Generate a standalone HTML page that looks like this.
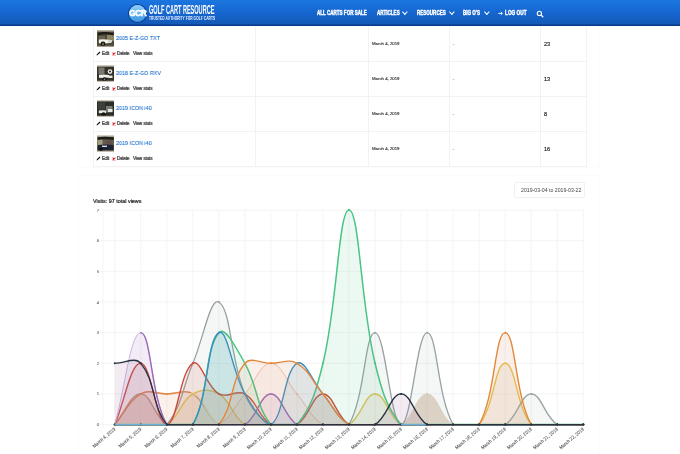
<!DOCTYPE html>
<html><head><meta charset="utf-8">
<style>
html,body{margin:0;padding:0;}
body{width:680px;height:454px;overflow:hidden;position:relative;background:#fff;font-family:"Liberation Sans",sans-serif;}
.hdr{position:absolute;left:0;top:0;width:680px;height:26px;background:linear-gradient(#1b76e0,#1665cf 50%,#135ab9 88%);}
.hdr:after{content:"";position:absolute;left:0;right:0;bottom:0;height:2px;background:linear-gradient(#0f4ea6,#073582);}
.logo{position:absolute;left:128.9px;top:4.8px;width:17.4px;height:17.4px;border-radius:50%;background:linear-gradient(#8fd0fb,#5eb0ee 55%,#3f94de);box-shadow:0 0 0 1px #0c3c8a;}
.logo span{position:absolute;left:-2px;top:3.4px;width:21.4px;text-align:center;color:#fff;font-weight:bold;font-size:9.2px;letter-spacing:-0.7px;transform:scaleX(0.92);-webkit-text-stroke:0.5px #fff;}
.brand{position:absolute;left:148.8px;top:3.4px;color:#fff;font-weight:bold;font-size:12.3px;white-space:nowrap;transform-origin:0 0;transform:scaleX(0.457);letter-spacing:-0.1px;}
.tag{position:absolute;left:149px;top:14.9px;color:#eef5ff;font-weight:bold;font-size:5.9px;white-space:nowrap;transform-origin:0 0;transform:scaleX(0.548);letter-spacing:0.1px;}
.nav{position:absolute;top:9.3px;color:#fff;font-weight:bold;font-size:6.3px;white-space:nowrap;transform-origin:0 0;-webkit-text-stroke:0.4px #fff;}
.chev{position:absolute;top:9.6px;width:2.7px;height:2.7px;border-right:1.1px solid #fff;border-bottom:1.1px solid #fff;transform:rotate(45deg);}
.card{position:absolute;background:#fff;box-shadow:0 0 0 1px #fcfcfc;}
.tline{position:absolute;background:#f2f2f2;}
.row{position:absolute;left:93px;width:493px;height:34.6px;}
.thumb{position:absolute;left:3.9px;top:2.9px;}
.title{position:absolute;left:23px;top:7.7px;color:#1e6fcc;font-size:5.9px;transform-origin:0 0;transform:scaleX(0.915);white-space:nowrap;will-change:transform;-webkit-text-stroke:0.1px #1e6fcc;}
.pen{position:absolute;left:3.3px;top:24.3px;}
.xx{position:absolute;left:19.2px;top:24.8px;}
.act{position:absolute;top:23.7px;color:#2a2a2a;font-size:4.75px;transform-origin:0 0;transform:scaleX(0.9);white-space:nowrap;will-change:transform;-webkit-text-stroke:0.2px #2a2a2a;}
.date{position:absolute;left:278.8px;top:14.1px;color:#222;font-size:4.3px;white-space:nowrap;will-change:transform;-webkit-text-stroke:0.1px #222;}
.dash{position:absolute;left:359.5px;top:13.8px;color:#555;font-size:5px;}
.num{position:absolute;left:450.6px;top:13.7px;color:#1a1a1a;font-size:5.6px;will-change:transform;-webkit-text-stroke:0.15px #1a1a1a;}
.visits{position:absolute;left:92.8px;top:198.2px;color:#1a1a1a;font-size:5.4px;white-space:nowrap;will-change:transform;-webkit-text-stroke:0.2px #1a1a1a;}
.range{position:absolute;left:514.5px;top:183.3px;width:69.5px;height:13.5px;box-shadow:0 0 0 0.6px #e8e8e8;}
.range span{position:absolute;left:6px;top:4px;color:#444;font-size:5.2px;white-space:nowrap;will-change:transform;}
</style></head><body>
<div class="card" style="left:79px;top:-2px;width:520px;height:169px;"></div>
<div class="card" style="left:79px;top:175.5px;width:520px;height:290px;"></div>
<div class="tline" style="left:93px;top:26px;width:0.8px;height:140.8px;"></div>
<div class="tline" style="left:255px;top:26px;width:0.8px;height:140.8px;"></div>
<div class="tline" style="left:368px;top:26px;width:0.8px;height:140.8px;"></div>
<div class="tline" style="left:449px;top:26px;width:0.8px;height:140.8px;"></div>
<div class="tline" style="left:540px;top:26px;width:0.8px;height:140.8px;"></div>
<div class="tline" style="left:585.5px;top:26px;width:0.8px;height:140.8px;"></div>
<div class="tline" style="left:93px;top:61.2px;width:493px;height:0.8px;"></div>
<div class="tline" style="left:93px;top:96.1px;width:493px;height:0.8px;"></div>
<div class="tline" style="left:93px;top:131.1px;width:493px;height:0.8px;"></div>
<div class="tline" style="left:93px;top:166.1px;width:493px;height:0.8px;"></div>

<div class="row" style="top:27.1px">
  <svg class="thumb" width="17.3" height="17.3" viewBox="0 0 17.3 17.3"><defs><filter id="tb" x="-5%" y="-5%" width="110%" height="110%"><feGaussianBlur stdDeviation="0.35"/></filter></defs><g filter="url(#tb)"><rect width="17.3" height="17.3" fill="#4d4838"/><rect x="10" y="5" width="7.3" height="6" fill="#8c8660"/><rect x="0" y="0" width="17.3" height="1.6" fill="#b8b0a0"/><path d="M1 3 Q8 1 16.5 3.5 L16.5 5.5 Q8 3 1 5.5Z" fill="#1d1b16"/><rect x="2" y="6" width="6" height="3" fill="#6a6350"/><path d="M1.8 9.6 Q7 8.8 13.5 10 L14 12.8 Q8 14 1.8 13.2Z" fill="#f1f0ea"/><rect x="11" y="10" width="4" height="2.5" fill="#d8d6ce"/><circle cx="6" cy="14" r="2.4" fill="#141310"/><circle cx="6" cy="14" r="0.9" fill="#8a8a8a"/><rect x="0" y="15.8" width="17.3" height="1.5" fill="#a89c8c"/></g></svg>
  <div class="title">2005 E-Z-GO TXT</div>
  <svg class="pen" width="5" height="5" viewBox="0 0 5 5"><path d="M0.6 4.4 L0.9 3.3 L3.6 0.6 L4.4 1.4 L1.7 4.1Z" fill="#111"/></svg>
  <div class="act" style="left:9.1px">Edit</div>
  <svg class="xx" width="4" height="4" viewBox="0 0 4 4"><path d="M0.6 0.6 L3.4 3.4 M3.4 0.6 L0.6 3.4" stroke="#d42a2a" stroke-width="1.1"/></svg>
  <div class="act" style="left:23.6px">Delete</div>
  <div class="act" style="left:39.6px">View stats</div>
  <div class="date">March 4, 2019</div>
  <div class="dash">-</div>
  <div class="num">23</div>
</div>
<div class="row" style="top:62.1px">
  <svg class="thumb" width="17.3" height="17.3" viewBox="0 0 17.3 17.3"><defs><filter id="tb" x="-5%" y="-5%" width="110%" height="110%"><feGaussianBlur stdDeviation="0.35"/></filter></defs><g filter="url(#tb)"><rect width="17.3" height="17.3" fill="#34322c"/><rect x="0" y="0" width="17.3" height="1.6" fill="#cfcabe"/><rect x="1.5" y="2.5" width="6" height="6.5" fill="#7a766c"/><circle cx="13" cy="6.6" r="2.3" fill="#f2f2ee"/><circle cx="13" cy="6.6" r="1" fill="#1a1a1a"/><path d="M2 9.8 Q7 9 12 10 L12 12.6 Q7 13.2 2 12.8Z" fill="#efefe9"/><rect x="11.5" y="10.6" width="4" height="2.4" fill="#e8e8e2"/><circle cx="7.5" cy="14.4" r="2.2" fill="#0f0f0f"/><circle cx="7.5" cy="14.4" r="0.8" fill="#888"/><rect x="0" y="15.8" width="17.3" height="1.5" fill="#c8c0b2"/></g></svg>
  <div class="title">2018 E-Z-GO RXV</div>
  <svg class="pen" width="5" height="5" viewBox="0 0 5 5"><path d="M0.6 4.4 L0.9 3.3 L3.6 0.6 L4.4 1.4 L1.7 4.1Z" fill="#111"/></svg>
  <div class="act" style="left:9.1px">Edit</div>
  <svg class="xx" width="4" height="4" viewBox="0 0 4 4"><path d="M0.6 0.6 L3.4 3.4 M3.4 0.6 L0.6 3.4" stroke="#d42a2a" stroke-width="1.1"/></svg>
  <div class="act" style="left:23.6px">Delete</div>
  <div class="act" style="left:39.6px">View stats</div>
  <div class="date">March 4, 2019</div>
  <div class="dash">-</div>
  <div class="num">13</div>
</div>
<div class="row" style="top:97.1px">
  <svg class="thumb" width="17.3" height="17.3" viewBox="0 0 17.3 17.3"><defs><filter id="tb" x="-5%" y="-5%" width="110%" height="110%"><feGaussianBlur stdDeviation="0.35"/></filter></defs><g filter="url(#tb)"><rect width="17.3" height="17.3" fill="#2a2d28"/><rect x="0" y="0" width="17.3" height="1.4" fill="#c9c3b6"/><rect x="1" y="2.5" width="7" height="7" fill="#3c4238"/><rect x="9" y="6" width="6.5" height="6.5" fill="#777a74"/><rect x="11" y="9" width="4.5" height="3" fill="#e6e6e2"/><path d="M1.8 10.5 Q6 9.8 9 10.6 L9 13 Q6 13.4 1.8 13Z" fill="#e9e9e5"/><circle cx="6.5" cy="14.3" r="2" fill="#121212"/><rect x="0" y="15.8" width="17.3" height="1.5" fill="#c6bdac"/></g></svg>
  <div class="title">2019 ICON i40</div>
  <svg class="pen" width="5" height="5" viewBox="0 0 5 5"><path d="M0.6 4.4 L0.9 3.3 L3.6 0.6 L4.4 1.4 L1.7 4.1Z" fill="#111"/></svg>
  <div class="act" style="left:9.1px">Edit</div>
  <svg class="xx" width="4" height="4" viewBox="0 0 4 4"><path d="M0.6 0.6 L3.4 3.4 M3.4 0.6 L0.6 3.4" stroke="#d42a2a" stroke-width="1.1"/></svg>
  <div class="act" style="left:23.6px">Delete</div>
  <div class="act" style="left:39.6px">View stats</div>
  <div class="date">March 4, 2019</div>
  <div class="dash">-</div>
  <div class="num">8</div>
</div>
<div class="row" style="top:132.0px">
  <svg class="thumb" width="17.3" height="17.3" viewBox="0 0 17.3 17.3"><defs><filter id="tb" x="-5%" y="-5%" width="110%" height="110%"><feGaussianBlur stdDeviation="0.35"/></filter></defs><g filter="url(#tb)"><rect width="17.3" height="17.3" fill="#5e5d4c"/><rect x="0" y="0" width="17.3" height="1.6" fill="#d6d0bf"/><rect x="0.5" y="4" width="5" height="7" fill="#a09e80"/><path d="M1 2.4 Q8 1.2 16.5 2.6 L16.5 5 Q8 3.6 1 5Z" fill="#1c1c18"/><rect x="9" y="5.5" width="6" height="5" fill="#62504a"/><path d="M0.8 10 Q8 9 16.5 10 L16.5 15.3 L0.8 15.3Z" fill="#1b2333"/><rect x="5" y="10.6" width="5" height="1.4" fill="#d6dce6"/><circle cx="4" cy="14.6" r="1.8" fill="#0b0b0e"/><rect x="0" y="15.8" width="17.3" height="1.5" fill="#c4bcac"/></g></svg>
  <div class="title">2019 ICON i40</div>
  <svg class="pen" width="5" height="5" viewBox="0 0 5 5"><path d="M0.6 4.4 L0.9 3.3 L3.6 0.6 L4.4 1.4 L1.7 4.1Z" fill="#111"/></svg>
  <div class="act" style="left:9.1px">Edit</div>
  <svg class="xx" width="4" height="4" viewBox="0 0 4 4"><path d="M0.6 0.6 L3.4 3.4 M3.4 0.6 L0.6 3.4" stroke="#d42a2a" stroke-width="1.1"/></svg>
  <div class="act" style="left:23.6px">Delete</div>
  <div class="act" style="left:39.6px">View stats</div>
  <div class="date">March 4, 2019</div>
  <div class="dash">-</div>
  <div class="num">16</div>
</div>
<div class="visits">Visits: 97 total views</div>
<div class="range"><span>2019-03-04 to 2019-03-22</span></div>
<svg width="680" height="454" viewBox="0 0 680 454" style="position:absolute;left:0;top:0" font-family="Liberation Sans, sans-serif"><defs><clipPath id="purpclip"><rect x="140.5" y="200" width="500" height="240"/></clipPath></defs>
<line x1="99" y1="424.60" x2="584" y2="424.60" stroke="#efefef" stroke-width="0.7"/>
<line x1="99" y1="393.95" x2="584" y2="393.95" stroke="#efefef" stroke-width="0.7"/>
<line x1="99" y1="363.30" x2="584" y2="363.30" stroke="#efefef" stroke-width="0.7"/>
<line x1="99" y1="332.65" x2="584" y2="332.65" stroke="#efefef" stroke-width="0.7"/>
<line x1="99" y1="302.00" x2="584" y2="302.00" stroke="#efefef" stroke-width="0.7"/>
<line x1="99" y1="271.35" x2="584" y2="271.35" stroke="#efefef" stroke-width="0.7"/>
<line x1="99" y1="240.70" x2="584" y2="240.70" stroke="#efefef" stroke-width="0.7"/>
<line x1="99" y1="210.05" x2="584" y2="210.05" stroke="#efefef" stroke-width="0.7"/>
<line x1="103" y1="210.05" x2="103" y2="428.60" stroke="#efefef" stroke-width="0.7"/>
<line x1="114.75" y1="210.05" x2="114.75" y2="428.60" stroke="#efefef" stroke-width="0.7"/>
<line x1="140.78" y1="210.05" x2="140.78" y2="428.60" stroke="#efefef" stroke-width="0.7"/>
<line x1="166.81" y1="210.05" x2="166.81" y2="428.60" stroke="#efefef" stroke-width="0.7"/>
<line x1="192.84" y1="210.05" x2="192.84" y2="428.60" stroke="#efefef" stroke-width="0.7"/>
<line x1="218.87" y1="210.05" x2="218.87" y2="428.60" stroke="#efefef" stroke-width="0.7"/>
<line x1="244.90" y1="210.05" x2="244.90" y2="428.60" stroke="#efefef" stroke-width="0.7"/>
<line x1="270.93" y1="210.05" x2="270.93" y2="428.60" stroke="#efefef" stroke-width="0.7"/>
<line x1="296.96" y1="210.05" x2="296.96" y2="428.60" stroke="#efefef" stroke-width="0.7"/>
<line x1="322.99" y1="210.05" x2="322.99" y2="428.60" stroke="#efefef" stroke-width="0.7"/>
<line x1="349.02" y1="210.05" x2="349.02" y2="428.60" stroke="#efefef" stroke-width="0.7"/>
<line x1="375.05" y1="210.05" x2="375.05" y2="428.60" stroke="#efefef" stroke-width="0.7"/>
<line x1="401.08" y1="210.05" x2="401.08" y2="428.60" stroke="#efefef" stroke-width="0.7"/>
<line x1="427.11" y1="210.05" x2="427.11" y2="428.60" stroke="#efefef" stroke-width="0.7"/>
<line x1="453.14" y1="210.05" x2="453.14" y2="428.60" stroke="#efefef" stroke-width="0.7"/>
<line x1="479.17" y1="210.05" x2="479.17" y2="428.60" stroke="#efefef" stroke-width="0.7"/>
<line x1="505.20" y1="210.05" x2="505.20" y2="428.60" stroke="#efefef" stroke-width="0.7"/>
<line x1="531.23" y1="210.05" x2="531.23" y2="428.60" stroke="#efefef" stroke-width="0.7"/>
<line x1="557.26" y1="210.05" x2="557.26" y2="428.60" stroke="#efefef" stroke-width="0.7"/>
<line x1="583.29" y1="210.05" x2="583.29" y2="428.60" stroke="#efefef" stroke-width="0.7"/>
<text x="99.1" y="426.10" text-anchor="end" font-size="4.2" fill="#666" stroke="#666" stroke-width="0.08">0</text>
<text x="99.1" y="395.45" text-anchor="end" font-size="4.2" fill="#666" stroke="#666" stroke-width="0.08">1</text>
<text x="99.1" y="364.80" text-anchor="end" font-size="4.2" fill="#666" stroke="#666" stroke-width="0.08">2</text>
<text x="99.1" y="334.15" text-anchor="end" font-size="4.2" fill="#666" stroke="#666" stroke-width="0.08">3</text>
<text x="99.1" y="303.50" text-anchor="end" font-size="4.2" fill="#666" stroke="#666" stroke-width="0.08">4</text>
<text x="99.1" y="272.85" text-anchor="end" font-size="4.2" fill="#666" stroke="#666" stroke-width="0.08">5</text>
<text x="99.1" y="242.20" text-anchor="end" font-size="4.2" fill="#666" stroke="#666" stroke-width="0.08">6</text>
<text x="99.1" y="211.55" text-anchor="end" font-size="4.2" fill="#666" stroke="#666" stroke-width="0.08">7</text>
<path d="M114.75 424.60 C125.16 424.60 130.37 424.60 140.78 424.60 C151.19 424.60 156.40 424.60 166.81 424.60 C177.22 424.60 182.43 424.60 192.84 424.60 C203.25 424.60 208.46 424.60 218.87 424.60 C229.28 424.60 234.49 424.60 244.90 424.60 C255.31 424.60 260.52 424.60 270.93 424.60 C281.34 424.60 286.55 424.60 296.96 424.60 C307.37 424.60 312.58 424.60 322.99 424.60 C333.40 424.60 338.61 424.60 349.02 424.60 C359.43 424.60 364.64 424.60 375.05 424.60 C385.46 424.60 392.90 424.60 401.08 424.60 C413.72 417.16 416.70 393.95 427.11 393.95 C437.52 393.95 440.50 417.16 453.14 424.60 C461.32 424.60 468.76 424.60 479.17 424.60 C489.58 424.60 494.79 424.60 505.20 424.60 C515.61 424.60 520.82 424.60 531.23 424.60 C541.64 424.60 546.85 424.60 557.26 424.60 C567.67 424.60 572.88 424.60 583.29 424.60 L583.29 424.6 L114.75 424.6 Z" fill="rgba(180,150,115,0.40)" stroke="none"/>
<path d="M114.75 424.60 C125.16 424.60 130.37 424.60 140.78 424.60 C151.19 424.60 156.40 424.60 166.81 424.60 C177.22 424.60 182.43 424.60 192.84 424.60 C203.25 424.60 208.46 424.60 218.87 424.60 C229.28 424.60 234.49 424.60 244.90 424.60 C255.31 424.60 260.52 424.60 270.93 424.60 C281.34 424.60 286.55 424.60 296.96 424.60 C307.37 424.60 312.58 424.60 322.99 424.60 C333.40 424.60 338.61 424.60 349.02 424.60 C359.43 424.60 364.64 424.60 375.05 424.60 C385.46 424.60 392.90 424.60 401.08 424.60 C413.72 417.16 416.70 393.95 427.11 393.95 C437.52 393.95 440.50 417.16 453.14 424.60 C461.32 424.60 468.76 424.60 479.17 424.60 C489.58 424.60 494.79 424.60 505.20 424.60 C515.61 424.60 520.82 424.60 531.23 424.60 C541.64 424.60 546.85 424.60 557.26 424.60 C567.67 424.60 572.88 424.60 583.29 424.60" fill="none" stroke="#d9ccb6" stroke-width="0.6"/>
<circle cx="114.75" cy="424.60" r="1.0" fill="#d9ccb6"/>
<circle cx="140.78" cy="424.60" r="1.0" fill="#d9ccb6"/>
<circle cx="166.81" cy="424.60" r="1.0" fill="#d9ccb6"/>
<circle cx="192.84" cy="424.60" r="1.0" fill="#d9ccb6"/>
<circle cx="218.87" cy="424.60" r="1.0" fill="#d9ccb6"/>
<circle cx="244.90" cy="424.60" r="1.0" fill="#d9ccb6"/>
<circle cx="270.93" cy="424.60" r="1.0" fill="#d9ccb6"/>
<circle cx="296.96" cy="424.60" r="1.0" fill="#d9ccb6"/>
<circle cx="322.99" cy="424.60" r="1.0" fill="#d9ccb6"/>
<circle cx="349.02" cy="424.60" r="1.0" fill="#d9ccb6"/>
<circle cx="375.05" cy="424.60" r="1.0" fill="#d9ccb6"/>
<circle cx="401.08" cy="424.60" r="1.0" fill="#d9ccb6"/>
<circle cx="427.11" cy="393.95" r="1.0" fill="#d9ccb6"/>
<circle cx="453.14" cy="424.60" r="1.0" fill="#d9ccb6"/>
<circle cx="479.17" cy="424.60" r="1.0" fill="#d9ccb6"/>
<circle cx="505.20" cy="424.60" r="1.0" fill="#d9ccb6"/>
<circle cx="531.23" cy="424.60" r="1.0" fill="#d9ccb6"/>
<circle cx="557.26" cy="424.60" r="1.0" fill="#d9ccb6"/>
<circle cx="583.29" cy="424.60" r="1.0" fill="#d9ccb6"/>
<path d="M114.75 424.60 C125.16 412.34 130.37 393.95 140.78 393.95 C151.19 393.95 154.17 417.16 166.81 424.60 C174.99 424.60 182.43 424.60 192.84 424.60 C203.25 424.60 208.46 424.60 218.87 424.60 C229.28 424.60 234.49 424.60 244.90 424.60 C255.31 424.60 260.52 424.60 270.93 424.60 C281.34 424.60 286.55 424.60 296.96 424.60 C307.37 424.60 312.58 424.60 322.99 424.60 C333.40 424.60 338.61 424.60 349.02 424.60 C359.43 424.60 364.64 424.60 375.05 424.60 C385.46 424.60 390.67 424.60 401.08 424.60 C411.49 424.60 416.70 424.60 427.11 424.60 C437.52 424.60 442.73 424.60 453.14 424.60 C463.55 424.60 468.76 424.60 479.17 424.60 C489.58 424.60 494.79 424.60 505.20 424.60 C515.61 424.60 520.82 424.60 531.23 424.60 C541.64 424.60 546.85 424.60 557.26 424.60 C567.67 424.60 572.88 424.60 583.29 424.60 L583.29 424.6 L114.75 424.6 Z" fill="rgba(176,150,120,0.26)" stroke="none"/>
<path d="M114.75 424.60 C125.16 412.34 130.37 393.95 140.78 393.95 C151.19 393.95 154.17 417.16 166.81 424.60 C174.99 424.60 182.43 424.60 192.84 424.60 C203.25 424.60 208.46 424.60 218.87 424.60 C229.28 424.60 234.49 424.60 244.90 424.60 C255.31 424.60 260.52 424.60 270.93 424.60 C281.34 424.60 286.55 424.60 296.96 424.60 C307.37 424.60 312.58 424.60 322.99 424.60 C333.40 424.60 338.61 424.60 349.02 424.60 C359.43 424.60 364.64 424.60 375.05 424.60 C385.46 424.60 390.67 424.60 401.08 424.60 C411.49 424.60 416.70 424.60 427.11 424.60 C437.52 424.60 442.73 424.60 453.14 424.60 C463.55 424.60 468.76 424.60 479.17 424.60 C489.58 424.60 494.79 424.60 505.20 424.60 C515.61 424.60 520.82 424.60 531.23 424.60 C541.64 424.60 546.85 424.60 557.26 424.60 C567.67 424.60 572.88 424.60 583.29 424.60" fill="none" stroke="#b39a78" stroke-width="1.3"/>
<circle cx="114.75" cy="424.60" r="1.0" fill="#b39a78"/>
<circle cx="140.78" cy="393.95" r="1.0" fill="#b39a78"/>
<circle cx="166.81" cy="424.60" r="1.0" fill="#b39a78"/>
<circle cx="192.84" cy="424.60" r="1.0" fill="#b39a78"/>
<circle cx="218.87" cy="424.60" r="1.0" fill="#b39a78"/>
<circle cx="244.90" cy="424.60" r="1.0" fill="#b39a78"/>
<circle cx="270.93" cy="424.60" r="1.0" fill="#b39a78"/>
<circle cx="296.96" cy="424.60" r="1.0" fill="#b39a78"/>
<circle cx="322.99" cy="424.60" r="1.0" fill="#b39a78"/>
<circle cx="349.02" cy="424.60" r="1.0" fill="#b39a78"/>
<circle cx="375.05" cy="424.60" r="1.0" fill="#b39a78"/>
<circle cx="401.08" cy="424.60" r="1.0" fill="#b39a78"/>
<circle cx="427.11" cy="424.60" r="1.0" fill="#b39a78"/>
<circle cx="453.14" cy="424.60" r="1.0" fill="#b39a78"/>
<circle cx="479.17" cy="424.60" r="1.0" fill="#b39a78"/>
<circle cx="505.20" cy="424.60" r="1.0" fill="#b39a78"/>
<circle cx="531.23" cy="424.60" r="1.0" fill="#b39a78"/>
<circle cx="557.26" cy="424.60" r="1.0" fill="#b39a78"/>
<circle cx="583.29" cy="424.60" r="1.0" fill="#b39a78"/>
<path d="M114.75 424.60 C125.16 424.60 130.37 424.60 140.78 424.60 C151.19 424.60 156.40 424.60 166.81 424.60 C177.22 424.60 182.43 424.60 192.84 424.60 C203.25 424.60 210.69 424.60 218.87 424.60 C231.51 417.16 234.49 406.21 244.90 393.95 C255.31 381.69 260.52 363.30 270.93 363.30 C281.34 363.30 286.55 381.69 296.96 393.95 C307.37 406.21 310.35 417.16 322.99 424.60 C331.17 424.60 338.61 424.60 349.02 424.60 C359.43 424.60 364.64 424.60 375.05 424.60 C385.46 424.60 390.67 424.60 401.08 424.60 C411.49 424.60 416.70 424.60 427.11 424.60 C437.52 424.60 442.73 424.60 453.14 424.60 C463.55 424.60 468.76 424.60 479.17 424.60 C489.58 424.60 494.79 424.60 505.20 424.60 C515.61 424.60 520.82 424.60 531.23 424.60 C541.64 424.60 546.85 424.60 557.26 424.60 C567.67 424.60 572.88 424.60 583.29 424.60 L583.29 424.6 L114.75 424.6 Z" fill="rgba(240,170,140,0.10)" stroke="none"/>
<path d="M114.75 424.60 C125.16 424.60 130.37 424.60 140.78 424.60 C151.19 424.60 156.40 424.60 166.81 424.60 C177.22 424.60 182.43 424.60 192.84 424.60 C203.25 424.60 210.69 424.60 218.87 424.60 C231.51 417.16 234.49 406.21 244.90 393.95 C255.31 381.69 260.52 363.30 270.93 363.30 C281.34 363.30 286.55 381.69 296.96 393.95 C307.37 406.21 310.35 417.16 322.99 424.60 C331.17 424.60 338.61 424.60 349.02 424.60 C359.43 424.60 364.64 424.60 375.05 424.60 C385.46 424.60 390.67 424.60 401.08 424.60 C411.49 424.60 416.70 424.60 427.11 424.60 C437.52 424.60 442.73 424.60 453.14 424.60 C463.55 424.60 468.76 424.60 479.17 424.60 C489.58 424.60 494.79 424.60 505.20 424.60 C515.61 424.60 520.82 424.60 531.23 424.60 C541.64 424.60 546.85 424.60 557.26 424.60 C567.67 424.60 572.88 424.60 583.29 424.60" fill="none" stroke="#f0b8a0" stroke-width="0.9"/>
<circle cx="114.75" cy="424.60" r="1.0" fill="#f0b8a0"/>
<circle cx="140.78" cy="424.60" r="1.0" fill="#f0b8a0"/>
<circle cx="166.81" cy="424.60" r="1.0" fill="#f0b8a0"/>
<circle cx="192.84" cy="424.60" r="1.0" fill="#f0b8a0"/>
<circle cx="218.87" cy="424.60" r="1.0" fill="#f0b8a0"/>
<circle cx="244.90" cy="393.95" r="1.0" fill="#f0b8a0"/>
<circle cx="270.93" cy="363.30" r="1.0" fill="#f0b8a0"/>
<circle cx="296.96" cy="393.95" r="1.0" fill="#f0b8a0"/>
<circle cx="322.99" cy="424.60" r="1.0" fill="#f0b8a0"/>
<circle cx="349.02" cy="424.60" r="1.0" fill="#f0b8a0"/>
<circle cx="375.05" cy="424.60" r="1.0" fill="#f0b8a0"/>
<circle cx="401.08" cy="424.60" r="1.0" fill="#f0b8a0"/>
<circle cx="427.11" cy="424.60" r="1.0" fill="#f0b8a0"/>
<circle cx="453.14" cy="424.60" r="1.0" fill="#f0b8a0"/>
<circle cx="479.17" cy="424.60" r="1.0" fill="#f0b8a0"/>
<circle cx="505.20" cy="424.60" r="1.0" fill="#f0b8a0"/>
<circle cx="531.23" cy="424.60" r="1.0" fill="#f0b8a0"/>
<circle cx="557.26" cy="424.60" r="1.0" fill="#f0b8a0"/>
<circle cx="583.29" cy="424.60" r="1.0" fill="#f0b8a0"/>
<path d="M114.75 424.60 C125.16 412.34 128.14 401.39 140.78 393.95 C148.96 389.13 156.40 393.95 166.81 393.95 C177.22 393.95 184.66 389.13 192.84 393.95 C205.48 401.39 206.23 417.16 218.87 424.60 C227.05 424.60 234.49 424.60 244.90 424.60 C255.31 424.60 260.52 424.60 270.93 424.60 C281.34 424.60 286.55 424.60 296.96 424.60 C307.37 424.60 312.58 424.60 322.99 424.60 C333.40 424.60 338.61 424.60 349.02 424.60 C359.43 424.60 364.64 424.60 375.05 424.60 C385.46 424.60 390.67 424.60 401.08 424.60 C411.49 424.60 416.70 424.60 427.11 424.60 C437.52 424.60 442.73 424.60 453.14 424.60 C463.55 424.60 468.76 424.60 479.17 424.60 C489.58 424.60 494.79 424.60 505.20 424.60 C515.61 424.60 520.82 424.60 531.23 424.60 C541.64 424.60 546.85 424.60 557.26 424.60 C567.67 424.60 572.88 424.60 583.29 424.60 L583.29 424.6 L114.75 424.6 Z" fill="rgba(230,140,80,0.12)" stroke="none"/>
<path d="M114.75 424.60 C125.16 412.34 128.14 401.39 140.78 393.95 C148.96 389.13 156.40 393.95 166.81 393.95 C177.22 393.95 184.66 389.13 192.84 393.95 C205.48 401.39 206.23 417.16 218.87 424.60 C227.05 424.60 234.49 424.60 244.90 424.60 C255.31 424.60 260.52 424.60 270.93 424.60 C281.34 424.60 286.55 424.60 296.96 424.60 C307.37 424.60 312.58 424.60 322.99 424.60 C333.40 424.60 338.61 424.60 349.02 424.60 C359.43 424.60 364.64 424.60 375.05 424.60 C385.46 424.60 390.67 424.60 401.08 424.60 C411.49 424.60 416.70 424.60 427.11 424.60 C437.52 424.60 442.73 424.60 453.14 424.60 C463.55 424.60 468.76 424.60 479.17 424.60 C489.58 424.60 494.79 424.60 505.20 424.60 C515.61 424.60 520.82 424.60 531.23 424.60 C541.64 424.60 546.85 424.60 557.26 424.60 C567.67 424.60 572.88 424.60 583.29 424.60" fill="none" stroke="#e0874a" stroke-width="1.4"/>
<circle cx="114.75" cy="424.60" r="1.0" fill="#e0874a"/>
<circle cx="140.78" cy="393.95" r="1.0" fill="#e0874a"/>
<circle cx="166.81" cy="393.95" r="1.0" fill="#e0874a"/>
<circle cx="192.84" cy="393.95" r="1.0" fill="#e0874a"/>
<circle cx="218.87" cy="424.60" r="1.0" fill="#e0874a"/>
<circle cx="244.90" cy="424.60" r="1.0" fill="#e0874a"/>
<circle cx="270.93" cy="424.60" r="1.0" fill="#e0874a"/>
<circle cx="296.96" cy="424.60" r="1.0" fill="#e0874a"/>
<circle cx="322.99" cy="424.60" r="1.0" fill="#e0874a"/>
<circle cx="349.02" cy="424.60" r="1.0" fill="#e0874a"/>
<circle cx="375.05" cy="424.60" r="1.0" fill="#e0874a"/>
<circle cx="401.08" cy="424.60" r="1.0" fill="#e0874a"/>
<circle cx="427.11" cy="424.60" r="1.0" fill="#e0874a"/>
<circle cx="453.14" cy="424.60" r="1.0" fill="#e0874a"/>
<circle cx="479.17" cy="424.60" r="1.0" fill="#e0874a"/>
<circle cx="505.20" cy="424.60" r="1.0" fill="#e0874a"/>
<circle cx="531.23" cy="424.60" r="1.0" fill="#e0874a"/>
<circle cx="557.26" cy="424.60" r="1.0" fill="#e0874a"/>
<circle cx="583.29" cy="424.60" r="1.0" fill="#e0874a"/>
<path d="M114.75 424.60 C125.16 424.60 130.37 424.60 140.78 424.60 C151.19 424.60 158.63 424.60 166.81 424.60 C179.45 417.16 182.43 393.95 192.84 393.95 C203.25 393.95 206.23 417.16 218.87 424.60 C227.05 424.60 234.49 424.60 244.90 424.60 C255.31 424.60 260.52 424.60 270.93 424.60 C281.34 424.60 286.55 424.60 296.96 424.60 C307.37 424.60 312.58 424.60 322.99 424.60 C333.40 424.60 338.61 424.60 349.02 424.60 C359.43 424.60 364.64 424.60 375.05 424.60 C385.46 424.60 390.67 424.60 401.08 424.60 C411.49 424.60 416.70 424.60 427.11 424.60 C437.52 424.60 442.73 424.60 453.14 424.60 C463.55 424.60 468.76 424.60 479.17 424.60 C489.58 424.60 494.79 424.60 505.20 424.60 C515.61 424.60 520.82 424.60 531.23 424.60 C541.64 424.60 546.85 424.60 557.26 424.60 C567.67 424.60 572.88 424.60 583.29 424.60 L583.29 424.6 L114.75 424.6 Z" fill="rgba(240,225,200,0.10)" stroke="none"/>
<path d="M114.75 424.60 C125.16 424.60 130.37 424.60 140.78 424.60 C151.19 424.60 158.63 424.60 166.81 424.60 C179.45 417.16 182.43 393.95 192.84 393.95 C203.25 393.95 206.23 417.16 218.87 424.60 C227.05 424.60 234.49 424.60 244.90 424.60 C255.31 424.60 260.52 424.60 270.93 424.60 C281.34 424.60 286.55 424.60 296.96 424.60 C307.37 424.60 312.58 424.60 322.99 424.60 C333.40 424.60 338.61 424.60 349.02 424.60 C359.43 424.60 364.64 424.60 375.05 424.60 C385.46 424.60 390.67 424.60 401.08 424.60 C411.49 424.60 416.70 424.60 427.11 424.60 C437.52 424.60 442.73 424.60 453.14 424.60 C463.55 424.60 468.76 424.60 479.17 424.60 C489.58 424.60 494.79 424.60 505.20 424.60 C515.61 424.60 520.82 424.60 531.23 424.60 C541.64 424.60 546.85 424.60 557.26 424.60 C567.67 424.60 572.88 424.60 583.29 424.60" fill="none" stroke="#f6eedf" stroke-width="1.7"/>
<circle cx="114.75" cy="424.60" r="1.0" fill="#f6eedf"/>
<circle cx="140.78" cy="424.60" r="1.0" fill="#f6eedf"/>
<circle cx="166.81" cy="424.60" r="1.0" fill="#f6eedf"/>
<circle cx="192.84" cy="393.95" r="1.0" fill="#f6eedf"/>
<circle cx="218.87" cy="424.60" r="1.0" fill="#f6eedf"/>
<circle cx="244.90" cy="424.60" r="1.0" fill="#f6eedf"/>
<circle cx="270.93" cy="424.60" r="1.0" fill="#f6eedf"/>
<circle cx="296.96" cy="424.60" r="1.0" fill="#f6eedf"/>
<circle cx="322.99" cy="424.60" r="1.0" fill="#f6eedf"/>
<circle cx="349.02" cy="424.60" r="1.0" fill="#f6eedf"/>
<circle cx="375.05" cy="424.60" r="1.0" fill="#f6eedf"/>
<circle cx="401.08" cy="424.60" r="1.0" fill="#f6eedf"/>
<circle cx="427.11" cy="424.60" r="1.0" fill="#f6eedf"/>
<circle cx="453.14" cy="424.60" r="1.0" fill="#f6eedf"/>
<circle cx="479.17" cy="424.60" r="1.0" fill="#f6eedf"/>
<circle cx="505.20" cy="424.60" r="1.0" fill="#f6eedf"/>
<circle cx="531.23" cy="424.60" r="1.0" fill="#f6eedf"/>
<circle cx="557.26" cy="424.60" r="1.0" fill="#f6eedf"/>
<circle cx="583.29" cy="424.60" r="1.0" fill="#f6eedf"/>
<path d="M114.75 424.60 C125.16 424.60 130.37 424.60 140.78 424.60 C151.19 424.60 158.63 424.60 166.81 424.60 C179.45 417.16 180.20 401.39 192.84 393.95 C201.02 389.13 210.69 389.13 218.87 393.95 C231.51 401.39 232.26 417.16 244.90 424.60 C253.08 424.60 260.52 424.60 270.93 424.60 C281.34 424.60 286.55 424.60 296.96 424.60 C307.37 424.60 312.58 424.60 322.99 424.60 C333.40 424.60 340.84 424.60 349.02 424.60 C361.66 417.16 364.64 393.95 375.05 393.95 C385.46 393.95 388.44 417.16 401.08 424.60 C409.26 424.60 416.70 424.60 427.11 424.60 C437.52 424.60 442.73 424.60 453.14 424.60 C463.55 424.60 473.32 424.60 479.17 424.60 C494.14 406.97 494.79 363.30 505.20 363.30 C515.61 363.30 516.26 406.97 531.23 424.60 C537.08 424.60 546.85 424.60 557.26 424.60 C567.67 424.60 572.88 424.60 583.29 424.60 L583.29 424.6 L114.75 424.6 Z" fill="rgba(205,170,120,0.16)" stroke="none"/>
<path d="M114.75 424.60 C125.16 424.60 130.37 424.60 140.78 424.60 C151.19 424.60 158.63 424.60 166.81 424.60 C179.45 417.16 180.20 401.39 192.84 393.95 C201.02 389.13 210.69 389.13 218.87 393.95 C231.51 401.39 232.26 417.16 244.90 424.60 C253.08 424.60 260.52 424.60 270.93 424.60 C281.34 424.60 286.55 424.60 296.96 424.60 C307.37 424.60 312.58 424.60 322.99 424.60 C333.40 424.60 340.84 424.60 349.02 424.60 C361.66 417.16 364.64 393.95 375.05 393.95 C385.46 393.95 388.44 417.16 401.08 424.60 C409.26 424.60 416.70 424.60 427.11 424.60 C437.52 424.60 442.73 424.60 453.14 424.60 C463.55 424.60 473.32 424.60 479.17 424.60 C494.14 406.97 494.79 363.30 505.20 363.30 C515.61 363.30 516.26 406.97 531.23 424.60 C537.08 424.60 546.85 424.60 557.26 424.60 C567.67 424.60 572.88 424.60 583.29 424.60" fill="none" stroke="#e6c44e" stroke-width="1.4"/>
<circle cx="114.75" cy="424.60" r="1.0" fill="#e6c44e"/>
<circle cx="140.78" cy="424.60" r="1.0" fill="#e6c44e"/>
<circle cx="166.81" cy="424.60" r="1.0" fill="#e6c44e"/>
<circle cx="192.84" cy="393.95" r="1.0" fill="#e6c44e"/>
<circle cx="218.87" cy="393.95" r="1.0" fill="#e6c44e"/>
<circle cx="244.90" cy="424.60" r="1.0" fill="#e6c44e"/>
<circle cx="270.93" cy="424.60" r="1.0" fill="#e6c44e"/>
<circle cx="296.96" cy="424.60" r="1.0" fill="#e6c44e"/>
<circle cx="322.99" cy="424.60" r="1.0" fill="#e6c44e"/>
<circle cx="349.02" cy="424.60" r="1.0" fill="#e6c44e"/>
<circle cx="375.05" cy="393.95" r="1.0" fill="#e6c44e"/>
<circle cx="401.08" cy="424.60" r="1.0" fill="#e6c44e"/>
<circle cx="427.11" cy="424.60" r="1.0" fill="#e6c44e"/>
<circle cx="453.14" cy="424.60" r="1.0" fill="#e6c44e"/>
<circle cx="479.17" cy="424.60" r="1.0" fill="#e6c44e"/>
<circle cx="505.20" cy="363.30" r="1.0" fill="#e6c44e"/>
<circle cx="531.23" cy="424.60" r="1.0" fill="#e6c44e"/>
<circle cx="557.26" cy="424.60" r="1.0" fill="#e6c44e"/>
<circle cx="583.29" cy="424.60" r="1.0" fill="#e6c44e"/>
<path d="M114.75 424.60 C125.16 424.60 130.37 424.60 140.78 424.60 C151.19 424.60 160.96 424.60 166.81 424.60 C181.78 406.97 182.43 387.82 192.84 363.30 C203.25 338.78 210.32 296.96 218.87 302.00 C231.14 309.22 230.24 359.43 244.90 393.95 C251.07 408.47 258.29 417.16 270.93 424.60 C279.11 424.60 286.55 424.60 296.96 424.60 C307.37 424.60 312.58 424.60 322.99 424.60 C333.40 424.60 344.56 424.60 349.02 424.60 C365.39 395.69 364.64 332.65 375.05 332.65 C385.46 332.65 390.67 424.60 401.08 424.60 C411.49 424.60 416.70 332.65 427.11 332.65 C437.52 332.65 436.77 395.69 453.14 424.60 C457.60 424.60 468.76 424.60 479.17 424.60 C489.58 424.60 497.02 424.60 505.20 424.60 C517.84 417.16 520.82 393.95 531.23 393.95 C541.64 393.95 544.62 417.16 557.26 424.60 C565.44 424.60 572.88 424.60 583.29 424.60 L583.29 424.6 L114.75 424.6 Z" fill="rgba(160,170,170,0.11)" stroke="none"/>
<path d="M114.75 424.60 C125.16 424.60 130.37 424.60 140.78 424.60 C151.19 424.60 160.96 424.60 166.81 424.60 C181.78 406.97 182.43 387.82 192.84 363.30 C203.25 338.78 210.32 296.96 218.87 302.00 C231.14 309.22 230.24 359.43 244.90 393.95 C251.07 408.47 258.29 417.16 270.93 424.60 C279.11 424.60 286.55 424.60 296.96 424.60 C307.37 424.60 312.58 424.60 322.99 424.60 C333.40 424.60 344.56 424.60 349.02 424.60 C365.39 395.69 364.64 332.65 375.05 332.65 C385.46 332.65 390.67 424.60 401.08 424.60 C411.49 424.60 416.70 332.65 427.11 332.65 C437.52 332.65 436.77 395.69 453.14 424.60 C457.60 424.60 468.76 424.60 479.17 424.60 C489.58 424.60 497.02 424.60 505.20 424.60 C517.84 417.16 520.82 393.95 531.23 393.95 C541.64 393.95 544.62 417.16 557.26 424.60 C565.44 424.60 572.88 424.60 583.29 424.60" fill="none" stroke="#98a1a3" stroke-width="1.3"/>
<circle cx="114.75" cy="424.60" r="1.0" fill="#98a1a3"/>
<circle cx="140.78" cy="424.60" r="1.0" fill="#98a1a3"/>
<circle cx="166.81" cy="424.60" r="1.0" fill="#98a1a3"/>
<circle cx="192.84" cy="363.30" r="1.0" fill="#98a1a3"/>
<circle cx="218.87" cy="302.00" r="1.0" fill="#98a1a3"/>
<circle cx="244.90" cy="393.95" r="1.0" fill="#98a1a3"/>
<circle cx="270.93" cy="424.60" r="1.0" fill="#98a1a3"/>
<circle cx="296.96" cy="424.60" r="1.0" fill="#98a1a3"/>
<circle cx="322.99" cy="424.60" r="1.0" fill="#98a1a3"/>
<circle cx="349.02" cy="424.60" r="1.0" fill="#98a1a3"/>
<circle cx="375.05" cy="332.65" r="1.0" fill="#98a1a3"/>
<circle cx="401.08" cy="424.60" r="1.0" fill="#98a1a3"/>
<circle cx="427.11" cy="332.65" r="1.0" fill="#98a1a3"/>
<circle cx="453.14" cy="424.60" r="1.0" fill="#98a1a3"/>
<circle cx="479.17" cy="424.60" r="1.0" fill="#98a1a3"/>
<circle cx="505.20" cy="424.60" r="1.0" fill="#98a1a3"/>
<circle cx="531.23" cy="393.95" r="1.0" fill="#98a1a3"/>
<circle cx="557.26" cy="424.60" r="1.0" fill="#98a1a3"/>
<circle cx="583.29" cy="424.60" r="1.0" fill="#98a1a3"/>
<path d="M114.75 424.60 C125.16 400.08 130.37 363.30 140.78 363.30 C151.19 363.30 156.40 424.60 166.81 424.60 C177.22 424.60 179.86 370.94 192.84 363.30 C200.68 358.68 206.23 386.51 218.87 393.95 C227.05 398.77 236.72 389.13 244.90 393.95 C257.54 401.39 258.29 417.16 270.93 424.60 C279.11 424.60 288.78 424.60 296.96 424.60 C309.60 417.16 312.58 393.95 322.99 393.95 C333.40 393.95 336.38 417.16 349.02 424.60 C357.20 424.60 364.64 424.60 375.05 424.60 C385.46 424.60 390.67 424.60 401.08 424.60 C411.49 424.60 416.70 424.60 427.11 424.60 C437.52 424.60 442.73 424.60 453.14 424.60 C463.55 424.60 468.76 424.60 479.17 424.60 C489.58 424.60 494.79 424.60 505.20 424.60 C515.61 424.60 520.82 424.60 531.23 424.60 C541.64 424.60 546.85 424.60 557.26 424.60 C567.67 424.60 572.88 424.60 583.29 424.60 L583.29 424.6 L114.75 424.6 Z" fill="rgba(200,80,60,0.12)" stroke="none"/>
<path d="M114.75 424.60 C125.16 400.08 130.37 363.30 140.78 363.30 C151.19 363.30 156.40 424.60 166.81 424.60 C177.22 424.60 179.86 370.94 192.84 363.30 C200.68 358.68 206.23 386.51 218.87 393.95 C227.05 398.77 236.72 389.13 244.90 393.95 C257.54 401.39 258.29 417.16 270.93 424.60 C279.11 424.60 288.78 424.60 296.96 424.60 C309.60 417.16 312.58 393.95 322.99 393.95 C333.40 393.95 336.38 417.16 349.02 424.60 C357.20 424.60 364.64 424.60 375.05 424.60 C385.46 424.60 390.67 424.60 401.08 424.60 C411.49 424.60 416.70 424.60 427.11 424.60 C437.52 424.60 442.73 424.60 453.14 424.60 C463.55 424.60 468.76 424.60 479.17 424.60 C489.58 424.60 494.79 424.60 505.20 424.60 C515.61 424.60 520.82 424.60 531.23 424.60 C541.64 424.60 546.85 424.60 557.26 424.60 C567.67 424.60 572.88 424.60 583.29 424.60" fill="none" stroke="#cc4a3c" stroke-width="1.4"/>
<circle cx="114.75" cy="424.60" r="1.0" fill="#cc4a3c"/>
<circle cx="140.78" cy="363.30" r="1.0" fill="#cc4a3c"/>
<circle cx="166.81" cy="424.60" r="1.0" fill="#cc4a3c"/>
<circle cx="192.84" cy="363.30" r="1.0" fill="#cc4a3c"/>
<circle cx="218.87" cy="393.95" r="1.0" fill="#cc4a3c"/>
<circle cx="244.90" cy="393.95" r="1.0" fill="#cc4a3c"/>
<circle cx="270.93" cy="424.60" r="1.0" fill="#cc4a3c"/>
<circle cx="296.96" cy="424.60" r="1.0" fill="#cc4a3c"/>
<circle cx="322.99" cy="393.95" r="1.0" fill="#cc4a3c"/>
<circle cx="349.02" cy="424.60" r="1.0" fill="#cc4a3c"/>
<circle cx="375.05" cy="424.60" r="1.0" fill="#cc4a3c"/>
<circle cx="401.08" cy="424.60" r="1.0" fill="#cc4a3c"/>
<circle cx="427.11" cy="424.60" r="1.0" fill="#cc4a3c"/>
<circle cx="453.14" cy="424.60" r="1.0" fill="#cc4a3c"/>
<circle cx="479.17" cy="424.60" r="1.0" fill="#cc4a3c"/>
<circle cx="505.20" cy="424.60" r="1.0" fill="#cc4a3c"/>
<circle cx="531.23" cy="424.60" r="1.0" fill="#cc4a3c"/>
<circle cx="557.26" cy="424.60" r="1.0" fill="#cc4a3c"/>
<circle cx="583.29" cy="424.60" r="1.0" fill="#cc4a3c"/>
<path d="M114.75 424.60 C125.16 387.82 130.37 332.65 140.78 332.65 C151.19 332.65 150.44 395.69 166.81 424.60 C171.27 424.60 182.43 424.60 192.84 424.60 C203.25 424.60 208.46 424.60 218.87 424.60 C229.28 424.60 236.72 424.60 244.90 424.60 C257.54 417.16 260.52 393.95 270.93 393.95 C281.34 393.95 284.32 417.16 296.96 424.60 C305.14 424.60 312.58 424.60 322.99 424.60 C333.40 424.60 338.61 424.60 349.02 424.60 C359.43 424.60 364.64 424.60 375.05 424.60 C385.46 424.60 390.67 424.60 401.08 424.60 C411.49 424.60 416.70 424.60 427.11 424.60 C437.52 424.60 442.73 424.60 453.14 424.60 C463.55 424.60 468.76 424.60 479.17 424.60 C489.58 424.60 494.79 424.60 505.20 424.60 C515.61 424.60 520.82 424.60 531.23 424.60 C541.64 424.60 546.85 424.60 557.26 424.60 C567.67 424.60 572.88 424.60 583.29 424.60 L583.29 424.6 L114.75 424.6 Z" fill="rgba(155,100,185,0.12)" stroke="none"/>
<path d="M114.75 424.60 C125.16 387.82 130.37 332.65 140.78 332.65 C151.19 332.65 150.44 395.69 166.81 424.60 C171.27 424.60 182.43 424.60 192.84 424.60 C203.25 424.60 208.46 424.60 218.87 424.60 C229.28 424.60 236.72 424.60 244.90 424.60 C257.54 417.16 260.52 393.95 270.93 393.95 C281.34 393.95 284.32 417.16 296.96 424.60 C305.14 424.60 312.58 424.60 322.99 424.60 C333.40 424.60 338.61 424.60 349.02 424.60 C359.43 424.60 364.64 424.60 375.05 424.60 C385.46 424.60 390.67 424.60 401.08 424.60 C411.49 424.60 416.70 424.60 427.11 424.60 C437.52 424.60 442.73 424.60 453.14 424.60 C463.55 424.60 468.76 424.60 479.17 424.60 C489.58 424.60 494.79 424.60 505.20 424.60 C515.61 424.60 520.82 424.60 531.23 424.60 C541.64 424.60 546.85 424.60 557.26 424.60 C567.67 424.60 572.88 424.60 583.29 424.60" fill="none" stroke="#c9b3dd" stroke-width="1.0"/>
<circle cx="114.75" cy="424.60" r="1.0" fill="#c9b3dd"/>
<circle cx="140.78" cy="332.65" r="1.0" fill="#c9b3dd"/>
<circle cx="166.81" cy="424.60" r="1.0" fill="#c9b3dd"/>
<circle cx="192.84" cy="424.60" r="1.0" fill="#c9b3dd"/>
<circle cx="218.87" cy="424.60" r="1.0" fill="#c9b3dd"/>
<circle cx="244.90" cy="424.60" r="1.0" fill="#c9b3dd"/>
<circle cx="270.93" cy="393.95" r="1.0" fill="#c9b3dd"/>
<circle cx="296.96" cy="424.60" r="1.0" fill="#c9b3dd"/>
<circle cx="322.99" cy="424.60" r="1.0" fill="#c9b3dd"/>
<circle cx="349.02" cy="424.60" r="1.0" fill="#c9b3dd"/>
<circle cx="375.05" cy="424.60" r="1.0" fill="#c9b3dd"/>
<circle cx="401.08" cy="424.60" r="1.0" fill="#c9b3dd"/>
<circle cx="427.11" cy="424.60" r="1.0" fill="#c9b3dd"/>
<circle cx="453.14" cy="424.60" r="1.0" fill="#c9b3dd"/>
<circle cx="479.17" cy="424.60" r="1.0" fill="#c9b3dd"/>
<circle cx="505.20" cy="424.60" r="1.0" fill="#c9b3dd"/>
<circle cx="531.23" cy="424.60" r="1.0" fill="#c9b3dd"/>
<circle cx="557.26" cy="424.60" r="1.0" fill="#c9b3dd"/>
<circle cx="583.29" cy="424.60" r="1.0" fill="#c9b3dd"/>
<path d="M114.75 424.60 C125.16 387.82 130.37 332.65 140.78 332.65 C151.19 332.65 150.44 395.69 166.81 424.60 C171.27 424.60 182.43 424.60 192.84 424.60 C203.25 424.60 208.46 424.60 218.87 424.60 C229.28 424.60 236.72 424.60 244.90 424.60 C257.54 417.16 260.52 393.95 270.93 393.95 C281.34 393.95 284.32 417.16 296.96 424.60 C305.14 424.60 312.58 424.60 322.99 424.60 C333.40 424.60 338.61 424.60 349.02 424.60 C359.43 424.60 364.64 424.60 375.05 424.60 C385.46 424.60 390.67 424.60 401.08 424.60 C411.49 424.60 416.70 424.60 427.11 424.60 C437.52 424.60 442.73 424.60 453.14 424.60 C463.55 424.60 468.76 424.60 479.17 424.60 C489.58 424.60 494.79 424.60 505.20 424.60 C515.61 424.60 520.82 424.60 531.23 424.60 C541.64 424.60 546.85 424.60 557.26 424.60 C567.67 424.60 572.88 424.60 583.29 424.60" fill="none" stroke="#9a6ab8" stroke-width="1.4" clip-path="url(#purpclip)"/>
<path d="M114.75 424.60 C125.16 424.60 130.37 424.60 140.78 424.60 C151.19 424.60 156.40 424.60 166.81 424.60 C177.22 424.60 188.38 424.60 192.84 424.60 C209.21 395.69 204.21 349.91 218.87 332.65 C225.04 325.39 237.06 349.45 244.90 363.30 C257.88 386.23 255.96 406.97 270.93 424.60 C276.78 424.60 291.11 424.60 296.96 424.60 C311.93 406.97 316.74 389.04 322.99 363.30 C337.57 303.22 338.61 210.05 349.02 210.05 C359.43 210.05 360.47 303.22 375.05 363.30 C381.30 389.04 386.11 406.97 401.08 424.60 C406.93 424.60 416.70 424.60 427.11 424.60 C437.52 424.60 442.73 424.60 453.14 424.60 C463.55 424.60 468.76 424.60 479.17 424.60 C489.58 424.60 494.79 424.60 505.20 424.60 C515.61 424.60 520.82 424.60 531.23 424.60 C541.64 424.60 546.85 424.60 557.26 424.60 C567.67 424.60 572.88 424.60 583.29 424.60 L583.29 424.6 L114.75 424.6 Z" fill="rgba(70,195,125,0.10)" stroke="none"/>
<path d="M114.75 424.60 C125.16 424.60 130.37 424.60 140.78 424.60 C151.19 424.60 156.40 424.60 166.81 424.60 C177.22 424.60 188.38 424.60 192.84 424.60 C209.21 395.69 204.21 349.91 218.87 332.65 C225.04 325.39 237.06 349.45 244.90 363.30 C257.88 386.23 255.96 406.97 270.93 424.60 C276.78 424.60 291.11 424.60 296.96 424.60 C311.93 406.97 316.74 389.04 322.99 363.30 C337.57 303.22 338.61 210.05 349.02 210.05 C359.43 210.05 360.47 303.22 375.05 363.30 C381.30 389.04 386.11 406.97 401.08 424.60 C406.93 424.60 416.70 424.60 427.11 424.60 C437.52 424.60 442.73 424.60 453.14 424.60 C463.55 424.60 468.76 424.60 479.17 424.60 C489.58 424.60 494.79 424.60 505.20 424.60 C515.61 424.60 520.82 424.60 531.23 424.60 C541.64 424.60 546.85 424.60 557.26 424.60 C567.67 424.60 572.88 424.60 583.29 424.60" fill="none" stroke="#48c483" stroke-width="1.5"/>
<circle cx="114.75" cy="424.60" r="1.0" fill="#48c483"/>
<circle cx="140.78" cy="424.60" r="1.0" fill="#48c483"/>
<circle cx="166.81" cy="424.60" r="1.0" fill="#48c483"/>
<circle cx="192.84" cy="424.60" r="1.0" fill="#48c483"/>
<circle cx="218.87" cy="332.65" r="1.0" fill="#48c483"/>
<circle cx="244.90" cy="363.30" r="1.0" fill="#48c483"/>
<circle cx="270.93" cy="424.60" r="1.0" fill="#48c483"/>
<circle cx="296.96" cy="424.60" r="1.0" fill="#48c483"/>
<circle cx="322.99" cy="363.30" r="1.0" fill="#48c483"/>
<circle cx="349.02" cy="210.05" r="1.0" fill="#48c483"/>
<circle cx="375.05" cy="363.30" r="1.0" fill="#48c483"/>
<circle cx="401.08" cy="424.60" r="1.0" fill="#48c483"/>
<circle cx="427.11" cy="424.60" r="1.0" fill="#48c483"/>
<circle cx="453.14" cy="424.60" r="1.0" fill="#48c483"/>
<circle cx="479.17" cy="424.60" r="1.0" fill="#48c483"/>
<circle cx="505.20" cy="424.60" r="1.0" fill="#48c483"/>
<circle cx="531.23" cy="424.60" r="1.0" fill="#48c483"/>
<circle cx="557.26" cy="424.60" r="1.0" fill="#48c483"/>
<circle cx="583.29" cy="424.60" r="1.0" fill="#48c483"/>
<path d="M114.75 424.60 C125.16 424.60 130.37 424.60 140.78 424.60 C151.19 424.60 156.40 424.60 166.81 424.60 C177.22 424.60 188.38 424.60 192.84 424.60 C209.21 395.69 206.60 339.87 218.87 332.65 C227.42 327.61 231.92 371.02 244.90 393.95 C252.74 407.80 263.09 424.60 270.93 424.60 C283.91 416.96 283.98 370.94 296.96 363.30 C304.80 358.68 312.58 381.69 322.99 393.95 C333.40 406.21 336.38 417.16 349.02 424.60 C357.20 424.60 364.64 424.60 375.05 424.60 C385.46 424.60 390.67 424.60 401.08 424.60 C411.49 424.60 416.70 424.60 427.11 424.60 C437.52 424.60 442.73 424.60 453.14 424.60 C463.55 424.60 468.76 424.60 479.17 424.60 C489.58 424.60 494.79 424.60 505.20 424.60 C515.61 424.60 520.82 424.60 531.23 424.60 C541.64 424.60 546.85 424.60 557.26 424.60 C567.67 424.60 572.88 424.60 583.29 424.60 L583.29 424.6 L114.75 424.6 Z" fill="rgba(60,150,190,0.14)" stroke="none"/>
<path d="M114.75 424.60 C125.16 424.60 130.37 424.60 140.78 424.60 C151.19 424.60 156.40 424.60 166.81 424.60 C177.22 424.60 188.38 424.60 192.84 424.60 C209.21 395.69 206.60 339.87 218.87 332.65 C227.42 327.61 231.92 371.02 244.90 393.95 C252.74 407.80 263.09 424.60 270.93 424.60 C283.91 416.96 283.98 370.94 296.96 363.30 C304.80 358.68 312.58 381.69 322.99 393.95 C333.40 406.21 336.38 417.16 349.02 424.60 C357.20 424.60 364.64 424.60 375.05 424.60 C385.46 424.60 390.67 424.60 401.08 424.60 C411.49 424.60 416.70 424.60 427.11 424.60 C437.52 424.60 442.73 424.60 453.14 424.60 C463.55 424.60 468.76 424.60 479.17 424.60 C489.58 424.60 494.79 424.60 505.20 424.60 C515.61 424.60 520.82 424.60 531.23 424.60 C541.64 424.60 546.85 424.60 557.26 424.60 C567.67 424.60 572.88 424.60 583.29 424.60" fill="none" stroke="#3a8fc0" stroke-width="1.4"/>
<circle cx="114.75" cy="424.60" r="1.0" fill="#3a8fc0"/>
<circle cx="140.78" cy="424.60" r="1.0" fill="#3a8fc0"/>
<circle cx="166.81" cy="424.60" r="1.0" fill="#3a8fc0"/>
<circle cx="192.84" cy="424.60" r="1.0" fill="#3a8fc0"/>
<circle cx="218.87" cy="332.65" r="1.0" fill="#3a8fc0"/>
<circle cx="244.90" cy="393.95" r="1.0" fill="#3a8fc0"/>
<circle cx="270.93" cy="424.60" r="1.0" fill="#3a8fc0"/>
<circle cx="296.96" cy="363.30" r="1.0" fill="#3a8fc0"/>
<circle cx="322.99" cy="393.95" r="1.0" fill="#3a8fc0"/>
<circle cx="349.02" cy="424.60" r="1.0" fill="#3a8fc0"/>
<circle cx="375.05" cy="424.60" r="1.0" fill="#3a8fc0"/>
<circle cx="401.08" cy="424.60" r="1.0" fill="#3a8fc0"/>
<circle cx="427.11" cy="424.60" r="1.0" fill="#3a8fc0"/>
<circle cx="453.14" cy="424.60" r="1.0" fill="#3a8fc0"/>
<circle cx="479.17" cy="424.60" r="1.0" fill="#3a8fc0"/>
<circle cx="505.20" cy="424.60" r="1.0" fill="#3a8fc0"/>
<circle cx="531.23" cy="424.60" r="1.0" fill="#3a8fc0"/>
<circle cx="557.26" cy="424.60" r="1.0" fill="#3a8fc0"/>
<circle cx="583.29" cy="424.60" r="1.0" fill="#3a8fc0"/>
<path d="M114.75 424.60 C125.16 424.60 130.37 424.60 140.78 424.60 C151.19 424.60 156.40 424.60 166.81 424.60 C177.22 424.60 182.43 424.60 192.84 424.60 C203.25 424.60 213.02 424.60 218.87 424.60 C233.84 406.97 229.93 380.93 244.90 363.30 C250.75 356.41 260.52 363.30 270.93 363.30 C281.34 363.30 288.78 358.48 296.96 363.30 C309.60 370.74 312.58 381.69 322.99 393.95 C333.40 406.21 336.38 417.16 349.02 424.60 C357.20 424.60 364.64 424.60 375.05 424.60 C385.46 424.60 390.67 424.60 401.08 424.60 C411.49 424.60 416.70 424.60 427.11 424.60 C437.52 424.60 442.73 424.60 453.14 424.60 C463.55 424.60 474.71 424.60 479.17 424.60 C495.54 395.69 494.79 332.65 505.20 332.65 C515.61 332.65 514.86 395.69 531.23 424.60 C535.69 424.60 546.85 424.60 557.26 424.60 C567.67 424.60 572.88 424.60 583.29 424.60 L583.29 424.6 L114.75 424.6 Z" fill="rgba(215,150,115,0.14)" stroke="none"/>
<path d="M114.75 424.60 C125.16 424.60 130.37 424.60 140.78 424.60 C151.19 424.60 156.40 424.60 166.81 424.60 C177.22 424.60 182.43 424.60 192.84 424.60 C203.25 424.60 213.02 424.60 218.87 424.60 C233.84 406.97 229.93 380.93 244.90 363.30 C250.75 356.41 260.52 363.30 270.93 363.30 C281.34 363.30 288.78 358.48 296.96 363.30 C309.60 370.74 312.58 381.69 322.99 393.95 C333.40 406.21 336.38 417.16 349.02 424.60 C357.20 424.60 364.64 424.60 375.05 424.60 C385.46 424.60 390.67 424.60 401.08 424.60 C411.49 424.60 416.70 424.60 427.11 424.60 C437.52 424.60 442.73 424.60 453.14 424.60 C463.55 424.60 474.71 424.60 479.17 424.60 C495.54 395.69 494.79 332.65 505.20 332.65 C515.61 332.65 514.86 395.69 531.23 424.60 C535.69 424.60 546.85 424.60 557.26 424.60 C567.67 424.60 572.88 424.60 583.29 424.60" fill="none" stroke="#e5873a" stroke-width="1.4"/>
<circle cx="114.75" cy="424.60" r="1.0" fill="#e5873a"/>
<circle cx="140.78" cy="424.60" r="1.0" fill="#e5873a"/>
<circle cx="166.81" cy="424.60" r="1.0" fill="#e5873a"/>
<circle cx="192.84" cy="424.60" r="1.0" fill="#e5873a"/>
<circle cx="218.87" cy="424.60" r="1.0" fill="#e5873a"/>
<circle cx="244.90" cy="363.30" r="1.0" fill="#e5873a"/>
<circle cx="270.93" cy="363.30" r="1.0" fill="#e5873a"/>
<circle cx="296.96" cy="363.30" r="1.0" fill="#e5873a"/>
<circle cx="322.99" cy="393.95" r="1.0" fill="#e5873a"/>
<circle cx="349.02" cy="424.60" r="1.0" fill="#e5873a"/>
<circle cx="375.05" cy="424.60" r="1.0" fill="#e5873a"/>
<circle cx="401.08" cy="424.60" r="1.0" fill="#e5873a"/>
<circle cx="427.11" cy="424.60" r="1.0" fill="#e5873a"/>
<circle cx="453.14" cy="424.60" r="1.0" fill="#e5873a"/>
<circle cx="479.17" cy="424.60" r="1.0" fill="#e5873a"/>
<circle cx="505.20" cy="332.65" r="1.0" fill="#e5873a"/>
<circle cx="531.23" cy="424.60" r="1.0" fill="#e5873a"/>
<circle cx="557.26" cy="424.60" r="1.0" fill="#e5873a"/>
<circle cx="583.29" cy="424.60" r="1.0" fill="#e5873a"/>
<path d="M114.75 424.60 C125.16 424.60 130.37 424.60 140.78 424.60 C151.19 424.60 156.40 424.60 166.81 424.60 C177.22 424.60 182.43 424.60 192.84 424.60 C203.25 424.60 208.46 424.60 218.87 424.60 C229.28 424.60 234.49 424.60 244.90 424.60 C255.31 424.60 260.52 424.60 270.93 424.60 C281.34 424.60 286.55 424.60 296.96 424.60 C307.37 424.60 312.58 424.60 322.99 424.60 C333.40 424.60 338.61 424.60 349.02 424.60 C359.43 424.60 364.64 424.60 375.05 424.60 C385.46 424.60 390.67 424.60 401.08 424.60 C411.49 424.60 416.70 424.60 427.11 424.60 C437.52 424.60 442.73 424.60 453.14 424.60 C463.55 424.60 468.76 424.60 479.17 424.60 C489.58 424.60 494.79 424.60 505.20 424.60 C515.61 424.60 520.82 424.60 531.23 424.60 C541.64 424.60 546.85 424.60 557.26 424.60 C567.67 424.60 572.88 424.60 583.29 424.60 L583.29 424.6 L114.75 424.6 Z" fill="rgba(0,0,0,0)" stroke="none"/>
<path d="M114.75 424.60 C125.16 424.60 130.37 424.60 140.78 424.60 C151.19 424.60 156.40 424.60 166.81 424.60 C177.22 424.60 182.43 424.60 192.84 424.60 C203.25 424.60 208.46 424.60 218.87 424.60 C229.28 424.60 234.49 424.60 244.90 424.60 C255.31 424.60 260.52 424.60 270.93 424.60 C281.34 424.60 286.55 424.60 296.96 424.60 C307.37 424.60 312.58 424.60 322.99 424.60 C333.40 424.60 338.61 424.60 349.02 424.60 C359.43 424.60 364.64 424.60 375.05 424.60 C385.46 424.60 390.67 424.60 401.08 424.60 C411.49 424.60 416.70 424.60 427.11 424.60 C437.52 424.60 442.73 424.60 453.14 424.60 C463.55 424.60 468.76 424.60 479.17 424.60 C489.58 424.60 494.79 424.60 505.20 424.60 C515.61 424.60 520.82 424.60 531.23 424.60 C541.64 424.60 546.85 424.60 557.26 424.60 C567.67 424.60 572.88 424.60 583.29 424.60" fill="none" stroke="#27313f" stroke-width="1.3"/>
<circle cx="114.75" cy="424.60" r="1.0" fill="#27313f"/>
<circle cx="140.78" cy="424.60" r="1.0" fill="#27313f"/>
<circle cx="166.81" cy="424.60" r="1.0" fill="#27313f"/>
<circle cx="192.84" cy="424.60" r="1.0" fill="#27313f"/>
<circle cx="218.87" cy="424.60" r="1.0" fill="#27313f"/>
<circle cx="244.90" cy="424.60" r="1.0" fill="#27313f"/>
<circle cx="270.93" cy="424.60" r="1.0" fill="#27313f"/>
<circle cx="296.96" cy="424.60" r="1.0" fill="#27313f"/>
<circle cx="322.99" cy="424.60" r="1.0" fill="#27313f"/>
<circle cx="349.02" cy="424.60" r="1.0" fill="#27313f"/>
<circle cx="375.05" cy="424.60" r="1.0" fill="#27313f"/>
<circle cx="401.08" cy="424.60" r="1.0" fill="#27313f"/>
<circle cx="427.11" cy="424.60" r="1.0" fill="#27313f"/>
<circle cx="453.14" cy="424.60" r="1.0" fill="#27313f"/>
<circle cx="479.17" cy="424.60" r="1.0" fill="#27313f"/>
<circle cx="505.20" cy="424.60" r="1.0" fill="#27313f"/>
<circle cx="531.23" cy="424.60" r="1.0" fill="#27313f"/>
<circle cx="557.26" cy="424.60" r="1.0" fill="#27313f"/>
<circle cx="583.29" cy="424.60" r="1.0" fill="#27313f"/>
<path d="M114.75 424.60 C125.16 424.60 130.37 424.60 140.78 424.60 C151.19 424.60 156.40 424.60 166.81 424.60 C177.22 424.60 182.43 424.60 192.84 424.60 C203.25 424.60 208.46 424.60 218.87 424.60 C229.28 424.60 234.49 424.60 244.90 424.60 C255.31 424.60 260.52 424.60 270.93 424.60 C281.34 424.60 286.55 424.60 296.96 424.60 C307.37 424.60 312.58 424.60 322.99 424.60 C333.40 424.60 338.61 424.60 349.02 424.60 C359.43 424.60 364.64 424.60 375.05 424.60 C385.46 424.60 390.67 424.60 401.08 424.60 C411.49 424.60 416.70 424.60 427.11 424.60 C437.52 424.60 442.73 424.60 453.14 424.60 C463.55 424.60 468.76 424.60 479.17 424.60 C489.58 424.60 494.79 424.60 505.20 424.60 C515.61 424.60 520.82 424.60 531.23 424.60 C541.64 424.60 546.85 424.60 557.26 424.60 C567.67 424.60 572.88 424.60 583.29 424.60 L583.29 424.6 L114.75 424.6 Z" fill="rgba(100,180,225,0.0)" stroke="none"/>
<line x1="114.75" y1="424.6" x2="166.81" y2="424.6" stroke="#6ab4e0" stroke-width="1.3"/>
<line x1="401.08" y1="424.6" x2="427.11" y2="424.6" stroke="#6ab4e0" stroke-width="1.3"/>
<path d="M114.75 363.30 C125.16 363.30 134.93 356.41 140.78 363.30 C155.75 380.93 151.84 406.97 166.81 424.60 C172.66 424.60 182.43 424.60 192.84 424.60 C203.25 424.60 208.46 424.60 218.87 424.60 C229.28 424.60 234.49 424.60 244.90 424.60 C255.31 424.60 260.52 424.60 270.93 424.60 C281.34 424.60 286.55 424.60 296.96 424.60 C307.37 424.60 312.58 424.60 322.99 424.60 C333.40 424.60 338.61 424.60 349.02 424.60 C359.43 424.60 366.87 424.60 375.05 424.60 C387.69 417.16 390.67 393.95 401.08 393.95 C411.49 393.95 414.47 417.16 427.11 424.60 C435.29 424.60 442.73 424.60 453.14 424.60 C463.55 424.60 468.76 424.60 479.17 424.60 C489.58 424.60 494.79 424.60 505.20 424.60 C515.61 424.60 520.82 424.60 531.23 424.60 C541.64 424.60 546.85 424.60 557.26 424.60 C567.67 424.60 572.88 424.60 583.29 424.60 L583.29 424.6 L114.75 424.6 Z" fill="rgba(160,120,160,0.14)" stroke="none"/>
<path d="M114.75 363.30 C125.16 363.30 134.93 356.41 140.78 363.30 C155.75 380.93 151.84 406.97 166.81 424.60 C172.66 424.60 182.43 424.60 192.84 424.60 C203.25 424.60 208.46 424.60 218.87 424.60 C229.28 424.60 234.49 424.60 244.90 424.60 C255.31 424.60 260.52 424.60 270.93 424.60 C281.34 424.60 286.55 424.60 296.96 424.60 C307.37 424.60 312.58 424.60 322.99 424.60 C333.40 424.60 338.61 424.60 349.02 424.60 C359.43 424.60 366.87 424.60 375.05 424.60 C387.69 417.16 390.67 393.95 401.08 393.95 C411.49 393.95 414.47 417.16 427.11 424.60 C435.29 424.60 442.73 424.60 453.14 424.60 C463.55 424.60 468.76 424.60 479.17 424.60 C489.58 424.60 494.79 424.60 505.20 424.60 C515.61 424.60 520.82 424.60 531.23 424.60 C541.64 424.60 546.85 424.60 557.26 424.60 C567.67 424.60 572.88 424.60 583.29 424.60" fill="none" stroke="#27313f" stroke-width="1.3"/>
<circle cx="114.75" cy="363.30" r="1.0" fill="#27313f"/>
<circle cx="140.78" cy="363.30" r="1.0" fill="#27313f"/>
<circle cx="166.81" cy="424.60" r="1.0" fill="#27313f"/>
<circle cx="192.84" cy="424.60" r="1.0" fill="#27313f"/>
<circle cx="218.87" cy="424.60" r="1.0" fill="#27313f"/>
<circle cx="244.90" cy="424.60" r="1.0" fill="#27313f"/>
<circle cx="270.93" cy="424.60" r="1.0" fill="#27313f"/>
<circle cx="296.96" cy="424.60" r="1.0" fill="#27313f"/>
<circle cx="322.99" cy="424.60" r="1.0" fill="#27313f"/>
<circle cx="349.02" cy="424.60" r="1.0" fill="#27313f"/>
<circle cx="375.05" cy="424.60" r="1.0" fill="#27313f"/>
<circle cx="401.08" cy="393.95" r="1.0" fill="#27313f"/>
<circle cx="427.11" cy="424.60" r="1.0" fill="#27313f"/>
<circle cx="453.14" cy="424.60" r="1.0" fill="#27313f"/>
<circle cx="479.17" cy="424.60" r="1.0" fill="#27313f"/>
<circle cx="505.20" cy="424.60" r="1.0" fill="#27313f"/>
<circle cx="531.23" cy="424.60" r="1.0" fill="#27313f"/>
<circle cx="557.26" cy="424.60" r="1.0" fill="#27313f"/>
<circle cx="583.29" cy="424.60" r="1.0" fill="#27313f"/>
<text transform="translate(115.95 429.80) rotate(-40) scale(0.9 1)" text-anchor="end" font-size="4.95" fill="#555" stroke="#555" stroke-width="0.08">March 4, 2019</text>
<text transform="translate(141.98 429.80) rotate(-40) scale(0.9 1)" text-anchor="end" font-size="4.95" fill="#555" stroke="#555" stroke-width="0.08">March 5, 2019</text>
<text transform="translate(168.01 429.80) rotate(-40) scale(0.9 1)" text-anchor="end" font-size="4.95" fill="#555" stroke="#555" stroke-width="0.08">March 6, 2019</text>
<text transform="translate(194.04 429.80) rotate(-40) scale(0.9 1)" text-anchor="end" font-size="4.95" fill="#555" stroke="#555" stroke-width="0.08">March 7, 2019</text>
<text transform="translate(220.07 429.80) rotate(-40) scale(0.9 1)" text-anchor="end" font-size="4.95" fill="#555" stroke="#555" stroke-width="0.08">March 8, 2019</text>
<text transform="translate(246.10 429.80) rotate(-40) scale(0.9 1)" text-anchor="end" font-size="4.95" fill="#555" stroke="#555" stroke-width="0.08">March 9, 2019</text>
<text transform="translate(272.13 429.80) rotate(-40) scale(0.9 1)" text-anchor="end" font-size="4.95" fill="#555" stroke="#555" stroke-width="0.08">March 10, 2019</text>
<text transform="translate(298.16 429.80) rotate(-40) scale(0.9 1)" text-anchor="end" font-size="4.95" fill="#555" stroke="#555" stroke-width="0.08">March 11, 2019</text>
<text transform="translate(324.19 429.80) rotate(-40) scale(0.9 1)" text-anchor="end" font-size="4.95" fill="#555" stroke="#555" stroke-width="0.08">March 12, 2019</text>
<text transform="translate(350.22 429.80) rotate(-40) scale(0.9 1)" text-anchor="end" font-size="4.95" fill="#555" stroke="#555" stroke-width="0.08">March 13, 2019</text>
<text transform="translate(376.25 429.80) rotate(-40) scale(0.9 1)" text-anchor="end" font-size="4.95" fill="#555" stroke="#555" stroke-width="0.08">March 14, 2019</text>
<text transform="translate(402.28 429.80) rotate(-40) scale(0.9 1)" text-anchor="end" font-size="4.95" fill="#555" stroke="#555" stroke-width="0.08">March 15, 2019</text>
<text transform="translate(428.31 429.80) rotate(-40) scale(0.9 1)" text-anchor="end" font-size="4.95" fill="#555" stroke="#555" stroke-width="0.08">March 16, 2019</text>
<text transform="translate(454.34 429.80) rotate(-40) scale(0.9 1)" text-anchor="end" font-size="4.95" fill="#555" stroke="#555" stroke-width="0.08">March 17, 2019</text>
<text transform="translate(480.37 429.80) rotate(-40) scale(0.9 1)" text-anchor="end" font-size="4.95" fill="#555" stroke="#555" stroke-width="0.08">March 18, 2019</text>
<text transform="translate(506.40 429.80) rotate(-40) scale(0.9 1)" text-anchor="end" font-size="4.95" fill="#555" stroke="#555" stroke-width="0.08">March 19, 2019</text>
<text transform="translate(532.43 429.80) rotate(-40) scale(0.9 1)" text-anchor="end" font-size="4.95" fill="#555" stroke="#555" stroke-width="0.08">March 20, 2019</text>
<text transform="translate(558.46 429.80) rotate(-40) scale(0.9 1)" text-anchor="end" font-size="4.95" fill="#555" stroke="#555" stroke-width="0.08">March 21, 2019</text>
<text transform="translate(584.49 429.80) rotate(-40) scale(0.9 1)" text-anchor="end" font-size="4.95" fill="#555" stroke="#555" stroke-width="0.08">March 22, 2019</text></svg>
<div class="hdr">
  <div class="logo"><span>GCR</span></div>
  <div class="brand">GOLF CART RESOURCE</div>
  <div class="tag">TRUSTED AUTHORITY FOR GOLF CARTS</div>
  <div class="nav" style="left:317px;transform:scaleX(0.72)">ALL CARTS FOR SALE</div>
  <div class="nav" style="left:376.7px;transform:scaleX(0.72)">ARTICLES</div><div class="chev" style="left:403.3px"></div>
  <div class="nav" style="left:417px;transform:scaleX(0.72)">RESOURCES</div><div class="chev" style="left:449.5px"></div>
  <div class="nav" style="left:463px;transform:scaleX(0.72)">BIG O'S</div><div class="chev" style="left:485px"></div>
  <svg style="position:absolute;left:497.5px;top:10.8px" width="6" height="5" viewBox="0 0 6 5"><path d="M0.3 2.4 H4.2 M2.8 1 L4.4 2.4 L2.8 3.8" fill="none" stroke="#fff" stroke-width="0.9"/></svg>
  <div class="nav" style="left:505px;transform:scaleX(0.75)">LOG OUT</div>
  <svg style="position:absolute;left:535.5px;top:9.5px" width="9" height="9" viewBox="0 0 9 9"><circle cx="3.4" cy="3.4" r="2.1" fill="none" stroke="#fff" stroke-width="1.1"/><line x1="4.9" y1="4.9" x2="7.2" y2="7.2" stroke="#fff" stroke-width="1.3"/></svg>
</div>
</body></html>
